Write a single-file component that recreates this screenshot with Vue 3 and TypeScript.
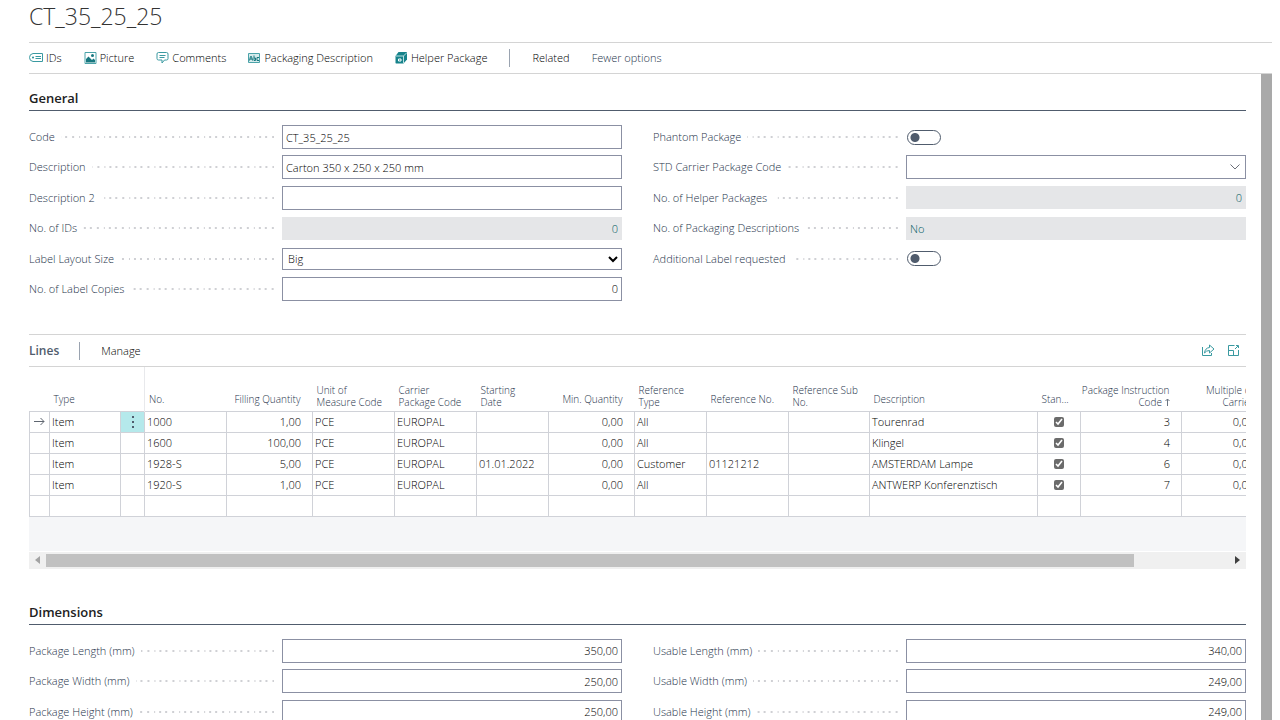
<script setup lang="ts">
import { reactive } from 'vue'

type Kind = 'text' | 'number' | 'readonly' | 'readonlyNumber' | 'select' | 'lookup' | 'toggle'

interface Field {
  id: string
  label: string
  kind: Kind
  value: string
}

interface Line {
  type: string
  no: string
  filling: string
  unit: string
  carrier: string
  starting: string
  min: string
  refType: string
  refNo: string
  refSub: string
  description: string
  standard: boolean | null
  instruction: string
  multiple: string
}

const general = reactive<Field[]>([
  { id: 'code', label: 'Code', kind: 'text', value: 'CT_35_25_25' },
  { id: 'description', label: 'Description', kind: 'text', value: 'Carton 350 x 250 x 250 mm' },
  { id: 'description2', label: 'Description 2', kind: 'text', value: '' },
  { id: 'ids', label: 'No. of IDs', kind: 'readonlyNumber', value: '0' },
  { id: 'layout', label: 'Label Layout Size', kind: 'select', value: 'Big' },
  { id: 'copies', label: 'No. of Label Copies', kind: 'number', value: '0' },
  { id: 'phantom', label: 'Phantom Package', kind: 'toggle', value: '' },
  { id: 'std', label: 'STD Carrier Package Code', kind: 'lookup', value: '' },
  { id: 'helpers', label: 'No. of Helper Packages', kind: 'readonlyNumber', value: '0' },
  { id: 'descriptions', label: 'No. of Packaging Descriptions', kind: 'readonly', value: 'No' },
  { id: 'additional', label: 'Additional Label requested', kind: 'toggle', value: '' },
])

const dimensions = reactive<Field[]>([
  { id: 'plength', label: 'Package Length (mm)', kind: 'number', value: '350,00' },
  { id: 'pwidth', label: 'Package Width (mm)', kind: 'number', value: '250,00' },
  { id: 'pheight', label: 'Package Height (mm)', kind: 'number', value: '250,00' },
  { id: 'ulength', label: 'Usable Length (mm)', kind: 'number', value: '340,00' },
  { id: 'uwidth', label: 'Usable Width (mm)', kind: 'number', value: '249,00' },
  { id: 'uheight', label: 'Usable Height (mm)', kind: 'number', value: '249,00' },
])

const sections = [
  { title: 'General', fields: general, cls: 'fields six' },
  { title: 'Dimensions', fields: dimensions, cls: 'fields three' },
]

const empty: Line = {
  type: '', no: '', filling: '', unit: '', carrier: '', starting: '', min: '', refType: '',
  refNo: '', refSub: '', description: '', standard: null, instruction: '', multiple: '',
}

const base: Line = { ...empty, type: 'Item', unit: 'PCE', carrier: 'EUROPAL', min: '0,00', refType: 'All', standard: true, multiple: '0,00' }

const lines = reactive<Line[]>([
  { ...base, no: '1000', filling: '1,00', description: 'Tourenrad', instruction: '3' },
  { ...base, no: '1600', filling: '100,00', description: 'Klingel', instruction: '4' },
  { ...base, no: '1928-S', filling: '5,00', starting: '01.01.2022', refType: 'Customer', refNo: '01121212', description: 'AMSTERDAM Lampe', instruction: '6' },
  { ...base, no: '1920-S', filling: '1,00', description: 'ANTWERP Konferenztisch', instruction: '7' },
  { ...empty },
])
</script>

<template>
  <div class="page">
    <h1>CT_35_25_25</h1>
    <nav class="actions">
      <button type="button">
        <svg width="14" height="12" viewBox="0 0 14 12" fill="none" stroke="#3a9aa1">
          <path d="M4 1.500h9.500v8H4Q.5 9 .5 5.500T4 1.500z" />
          <path d="M6.500 4.500H12M6.500 6.500H12" />
          <circle cx="4" cy="5.500" r="1" fill="#1f8a92" stroke="none" />
        </svg>
        IDs
      </button>
      <button type="button">
        <svg width="13" height="12" viewBox="0 0 13 12">
          <path d="M1 .5h11v11H1z" fill="#fff" stroke="#4ba3a9" />
          <path d="M2 10.500V7l2.500-2.500L8 8l1.500-1.500L11 8v2.500z" fill="#17777f" />
          <circle cx="8.500" cy="3.500" r="1.500" fill="#17777f" />
        </svg>
        Picture
      </button>
      <button type="button">
        <svg width="13" height="12" viewBox="0 0 13 12" fill="none" stroke="#3a9aa1">
          <path d="M2.500.5h8q1.500 0 1.500 1.500v4.500q0 1.500-1.500 1.500H8.500L6 11V8H2.500Q1 8 1 6.500V2Q1 .5 2.500.5z" />
          <path d="M3.500 3.500h6M3.500 5.500h5" />
        </svg>
        Comments
      </button>
      <button type="button">
        <svg width="13" height="12" viewBox="0 0 13 12" fill="none">
          <path d="M.5 1.500h11v9H.5z" fill="#d5ebec" stroke="#4ba3a9" />
          <path d="M1.500 8.500l1-4h1l1 4M2 7h2.500M6 3.500v5h1.500V6H6M11 5.500H9v3h2" stroke="#17777f" />
        </svg>
        Packaging Description
      </button>
      <button type="button">
        <svg width="13" height="12" viewBox="0 0 13 12">
          <path d="M3.500 0H11.500L12 .5V7.500L8.500 11.500H1L.5 11V4z" fill="#17838b" />
          <path d="M1 4H8.500V11M8.500 4L11.500 1" fill="none" stroke="#b9e0e2" />
          <path d="M3.500 7h2.500v2h-2.500z" fill="#17838b" stroke="#fff" />
        </svg>
        Helper Package
      </button>
      <span class="bar"></span>
      <button type="button">Related</button>
      <button type="button" class="muted">Fewer options</button>
    </nav>

    <main>
      <div class="content">
        <template v-for="(section, index) in sections" :key="section.title">
          <section class="lines" v-if="index === 1">
            <header class="lines-head">
              <h2>Lines</h2>
              <span class="bar"></span>
              <button type="button">Manage</button>
              <span class="tools">
                <button type="button" aria-label="Share">
                  <svg width="14" height="13" viewBox="0 0 14 13" fill="none" stroke="#3a9aa1">
                    <path d="M1.500 3v8.500h9V9" />
                    <path d="M8.500 1l4.500 4-4.500 4V6.500Q5 6.500 3.500 9 4 4 8.500 3.500z" />
                  </svg>
                </button>
                <button type="button" aria-label="Expand">
                  <svg width="13" height="13" viewBox="0 0 13 13" fill="none" stroke="#3a9aa1">
                    <path d="M7.500 1.500h-6v10h10V6M1.500 6.500h5v5M8 5l3-3M9 1.500h2.500V4" />
                  </svg>
                </button>
              </span>
            </header>
            <div class="grid">
              <table>
                <colgroup>
                  <col class="w20" /><col class="w71" /><col class="w24" /><col class="w82" />
                  <col class="w86" /><col class="w82" /><col class="w82" /><col class="w72" />
                  <col class="w86" /><col class="w72" /><col class="w82" /><col class="w81" />
                  <col class="w168" /><col class="w43" /><col class="w101" /><col class="w84" />
                </colgroup>
                <thead>
                  <tr>
                    <th></th>
                    <th class="single">Type</th>
                    <th class="frozen"></th>
                    <th class="single">No.</th>
                    <th class="single num">Filling Quantity</th>
                    <th>Unit of<br />Measure Code</th>
                    <th>Carrier<br />Package Code</th>
                    <th>Starting<br />Date</th>
                    <th class="single num">Min. Quantity</th>
                    <th>Reference<br />Type</th>
                    <th class="single">Reference No.</th>
                    <th>Reference Sub<br />No.</th>
                    <th class="single">Description</th>
                    <th class="single">Stan...</th>
                    <th class="num">
                      Package Instruction<br />Code
                      <svg width="5" height="8" viewBox="0 0 5 8" fill="none" stroke="#6b7583"><path d="M2.500 8V1M.5 3l2-2 2 2" /></svg>
                    </th>
                    <th class="num">Multiple of<br />Carrier</th>
                  </tr>
                </thead>
                <tbody>
                  <tr v-for="(line, row) in lines" :key="row">
                    <td class="mark">
                      <svg v-if="row === 0" width="11" height="9" viewBox="0 0 11 9" fill="none" stroke="#5f6670"><path d="M0 4.500h10M6.500 1L10 4.500 6.500 8" /></svg>
                    </td>
                    <td>{{ line.type }}</td>
                    <td class="menu" :class="{ active: row === 0 }">
                      <button v-if="row === 0" type="button" aria-label="Row menu">
                        <svg width="4" height="12" viewBox="0 0 4 12" fill="#505c6d"><path d="M1 0h2v2H1zM1 5h2v2H1zM1 10h2v2H1z" /></svg>
                      </button>
                    </td>
                    <td>{{ line.no }}</td>
                    <td class="num">{{ line.filling }}</td>
                    <td>{{ line.unit }}</td>
                    <td>{{ line.carrier }}</td>
                    <td>{{ line.starting }}</td>
                    <td class="num">{{ line.min }}</td>
                    <td>{{ line.refType }}</td>
                    <td>{{ line.refNo }}</td>
                    <td>{{ line.refSub }}</td>
                    <td>{{ line.description }}</td>
                    <td class="check">
                      <input v-if="line.standard !== null" v-model="line.standard" type="checkbox" aria-label="Standard" />
                    </td>
                    <td class="num">{{ line.instruction }}</td>
                    <td class="num">{{ line.multiple }}</td>
                  </tr>
                </tbody>
              </table>
            </div>
            <div class="hscroll">
              <svg width="5" height="8" viewBox="0 0 5 8" fill="#a3a3a3"><path d="M5 0v8L0 4z" /></svg>
              <div class="track"><div class="thumb"></div></div>
              <svg width="5" height="8" viewBox="0 0 5 8" fill="#404040"><path d="M0 0v8l5-4z" /></svg>
            </div>
          </section>

          <section>
            <h2 class="title">{{ section.title }}</h2>
            <div :class="section.cls">
              <div v-for="field in section.fields" :key="field.id" class="field">
                <div class="caption">
                  <label :for="field.id">{{ field.label }}</label>
                  <span class="dots"></span>
                </div>
                <input v-if="field.kind === 'toggle'" :id="field.id" class="toggle" type="checkbox" role="switch" />
                <select v-else-if="field.kind === 'select'" :id="field.id" v-model="field.value" class="box">
                  <option>Big</option>
                  <option>Small</option>
                </select>
                <div v-else-if="field.kind === 'lookup'" class="box lookup">
                  <input :id="field.id" v-model="field.value" type="text" />
                  <button type="button" aria-label="Look up value">
                    <svg width="10" height="6" viewBox="0 0 10 6" fill="none" stroke="#6b6f78"><path d="M.5.5L5 5 9.500.5" /></svg>
                  </button>
                </div>
                <input
                  v-else
                  :id="field.id"
                  v-model="field.value"
                  type="text"
                  class="box"
                  :class="field.kind"
                  :readonly="field.kind.startsWith('readonly')"
                />
              </div>
            </div>
          </section>
        </template>
      </div>
      <div class="vscroll"></div>
    </main>
  </div>
</template>

<style>
body {
  margin: 0;
  background: #fff;
}
</style>

<style scoped>
* {
  box-sizing: border-box;
}
.page {
  display: flex;
  flex-direction: column;
  height: 100vh;
  overflow: hidden;
  padding-right: 8px;
  font-family: 'Open Sans', 'Noto Sans', sans-serif;
  font-size: 11px;
  line-height: 14px;
  font-weight: 300;
  color: #000;
}
button,
input,
select {
  font: inherit;
  color: inherit;
}
button {
  display: flex;
  align-items: center;
  gap: 3px;
  padding: 0;
  border: 0;
  background: none;
}
svg {
  flex: none;
}
h1 {
  margin: 0 0 10px 29px;
  font-size: 23px;
  line-height: 32px;
  font-weight: 300;
  color: #333;
}
h2 {
  margin: 0;
  font-size: 13px;
  line-height: 17px;
  font-weight: 600;
  color: #212121;
}
.actions {
  flex: none;
  display: flex;
  align-items: center;
  gap: 22px;
  height: 32px;
  margin-left: 29px;
  border: solid #d4d4d4;
  border-width: 1px 0;
}
.bar {
  width: 1px;
  height: 18px;
  background: #9aa3b0;
}
.muted {
  color: #26334a;
}
main {
  flex: 1;
  min-height: 0;
  display: flex;
}
.content {
  flex: 1;
  min-width: 0;
  padding: 16px 15px 0 29px;
}
.vscroll {
  flex: none;
  width: 11px;
  background: #a9a9a9;
}
.title {
  height: 21px;
  border-bottom: 1px solid #505c6d;
}
.fields {
  display: grid;
  grid-auto-flow: column;
  grid-template-columns: 1fr 1fr;
  column-gap: 31px;
  align-content: space-between;
  margin-top: 14px;
}
.six {
  grid-template-rows: repeat(6, 24px);
  height: 176px;
}
.three {
  grid-template-rows: repeat(3, 24px);
  height: 85px;
}
.field {
  display: flex;
  align-items: center;
}
.caption {
  flex: none;
  display: flex;
  align-items: center;
  gap: 6px;
  width: 253px;
  padding-right: 8px;
  color: #26334a;
}
.dots {
  flex: 1;
  height: 2px;
  background: linear-gradient(
      90deg,
      transparent 5px,
      #cfd0d4 5px 6px,
      transparent 6px 10px,
      #cfd0d4 10px 12px,
      transparent 12px 16px,
      #cfd0d4 16px 18px,
      transparent 18px 23px,
      #cfd0d4 23px
    )
    right / 25px 2px;
}
.box {
  flex: 1;
  min-width: 0;
  height: 24px;
  margin: 0;
  padding: 0 3px;
  border: 1px solid #8b90a3;
  border-radius: 0;
  background: #fff;
  outline: 0;
}
select.box {
  height: 22px;
  padding: 0 1px;
}
.number,
.readonlyNumber {
  text-align: right;
}
.readonly,
.readonlyNumber {
  height: 23px;
  border-color: #e5e6e8;
  background: #e5e6e8;
  color: #005a62;
}
.lookup {
  display: flex;
  align-items: center;
  padding-right: 5px;
}
.lookup input {
  flex: 1;
  min-width: 0;
  border: 0;
  padding: 0;
  outline: 0;
}
.toggle {
  appearance: none;
  width: 34px;
  height: 15px;
  margin: 0 0 0 1px;
  border: 1px solid #505c6d;
  border-radius: 8px;
  background: radial-gradient(circle at 7px 50%, #505c6d 4px, transparent 5px);
}
.lines {
  margin: 33px 0 35px;
}
.lines-head {
  display: flex;
  align-items: center;
  height: 33px;
  border: solid #d4d4d4;
  border-width: 1px 0;
}
.lines-head h2 {
  font-size: 12px;
  color: #505c6d;
}
.lines-head .bar {
  margin: 0 21px 0 20px;
}
.tools {
  display: flex;
  gap: 12px;
  margin-left: auto;
  padding-right: 6px;
}
.grid {
  overflow: hidden;
  padding-bottom: 34px;
  background: linear-gradient(#fff 44px, #f5f6f8 44px);
}
table {
  width: 1236px;
  table-layout: fixed;
  border-collapse: collapse;
  background: #fff;
}
.w20 { width: 20px; }
.w24 { width: 24px; }
.w43 { width: 43px; }
.w71 { width: 71px; }
.w72 { width: 72px; }
.w81 { width: 81px; }
.w82 { width: 82px; }
.w84 { width: 84px; }
.w86 { width: 86px; }
.w101 { width: 101px; }
.w168 { width: 168px; }
th {
  height: 44px;
  padding: 0 0 3px 4px;
  font-size: 10px;
  line-height: 12px;
  font-weight: inherit;
  text-align: left;
  vertical-align: bottom;
  white-space: nowrap;
  color: #26334a;
}
th.single {
  padding-bottom: 6px;
}
th.num {
  padding-left: 0;
  padding-right: 12px;
}
.frozen {
  border-right: 1px solid #e8e9ec;
}
td {
  height: 21px;
  padding: 0 2px;
  border: 1px solid #d0d2d8;
  white-space: nowrap;
}
td.num,
th.num {
  text-align: right;
}
td.num {
  padding-right: 11px;
}
.mark,
.check {
  padding: 0;
  text-align: center;
}
.mark svg,
.check input {
  display: block;
  margin: 0 auto;
}
.check input {
  width: 10px;
  height: 10px;
  accent-color: #6b6b6b;
}
.menu {
  padding: 0;
}
.menu button {
  margin: 0 auto;
}
.active {
  background: #b5e9eb;
}
.hscroll {
  display: flex;
  align-items: center;
  height: 17px;
  margin-top: 1px;
  padding: 0 6px;
  background: #f0f0f0;
}
.track {
  flex: 1;
  padding: 0 6px;
}
.thumb {
  width: 92%;
  height: 13px;
  background: #c1c1c1;
}
</style>
